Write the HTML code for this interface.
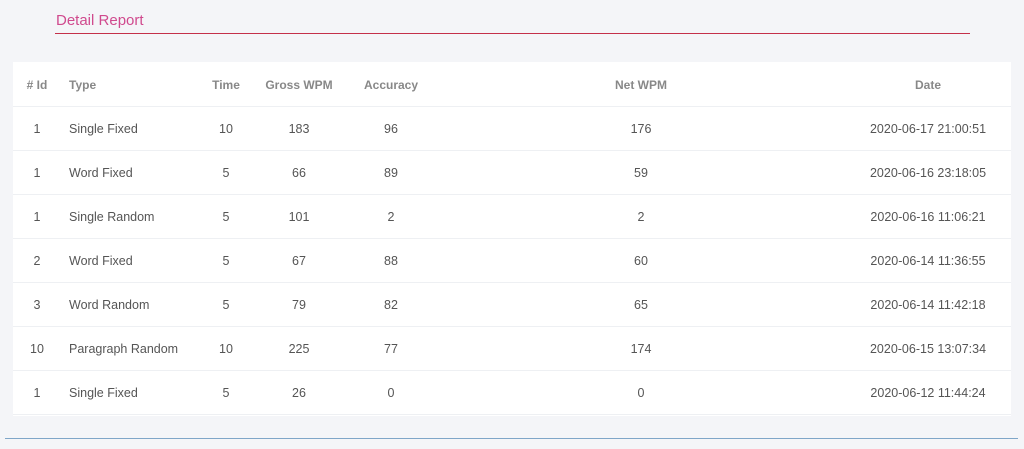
<!DOCTYPE html>
<html><head><style>
body{margin:0;width:1024px;height:449px;background:#f4f5f8;font-family:"Liberation Sans",sans-serif;position:relative;overflow:hidden}
.t{position:absolute;left:56px;top:12px;font-size:15px;color:#d04a8e}
.tl{position:absolute;left:55px;top:33px;width:915px;height:1px;background:#c4304a}
.card{position:absolute;left:13px;top:62px;width:998px;height:354px;background:#fff}
.row{position:absolute;left:0;width:998px;height:44px;border-bottom:1px solid #eef0f3;font-size:12.5px;color:#555;line-height:46px}
.row span{position:absolute;top:0;white-space:nowrap}
.c{transform:translateX(-50%)}
.h{font-weight:bold;color:#888;font-size:12px}
.bl{position:absolute;left:5px;top:438px;width:1013px;height:1px;background:#7fa6c8}
</style></head><body>
<div class="t">Detail Report</div><div class="tl"></div>
<div class="card" id="c"></div>
<div class="bl"></div>
<script>
var rows=[["# Id","Type","Time","Gross WPM","Accuracy","Net WPM","Date"],
["1","Single Fixed","10","183","96","176","2020-06-17 21:00:51"],
["1","Word Fixed","5","66","89","59","2020-06-16 23:18:05"],
["1","Single Random","5","101","2","2","2020-06-16 11:06:21"],
["2","Word Fixed","5","67","88","60","2020-06-14 11:36:55"],
["3","Word Random","5","79","82","65","2020-06-14 11:42:18"],
["10","Paragraph Random","10","225","77","174","2020-06-15 13:07:34"],
["1","Single Fixed","5","26","0","0","2020-06-12 11:44:24"]];
var xs=[24,null,213,286,378,628,915];
var h='';
rows.forEach(function(r,i){
h+='<div class="row'+(i==0?' h':'')+'" style="top:'+(i*44)+'px">';
r.forEach(function(v,j){
if(j==1)h+='<span style="left:56px">'+v+'</span>';
else h+='<span class="c" style="left:'+xs[j]+'px">'+v+'</span>';
});
h+='</div>';
});
document.getElementById('c').innerHTML=h;
</script>
</body></html>
